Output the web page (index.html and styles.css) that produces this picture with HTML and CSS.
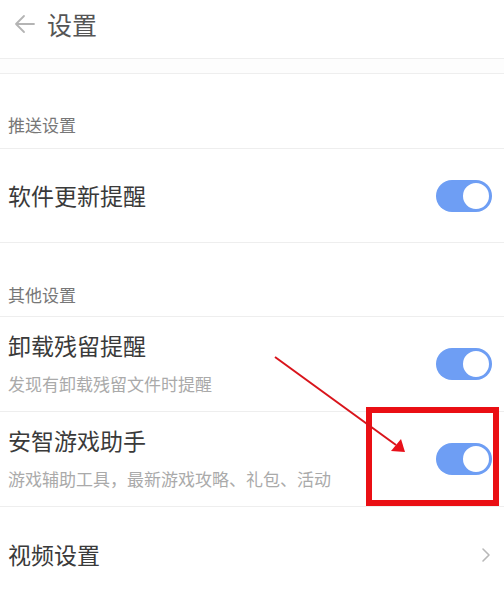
FILE: index.html
```html
<!DOCTYPE html>
<html lang="zh">
<head>
<meta charset="utf-8">
<link rel="stylesheet" href="styles.css">
</head>
<body>
<div class="page">
  <header class="header">
    <svg class="back" width="24" height="24" viewBox="0 0 24 24"><path d="M21 12H3M11 4L3 12L11 20" fill="none" stroke="#b4b4b4" stroke-width="1.8" stroke-linecap="round" stroke-linejoin="round"/></svg>
    <span class="title">设置</span>
  </header>
  <div class="band"></div>
  <div class="section">推送设置</div>
  <div class="row row-single">
    <div class="texts"><div class="name">软件更新提醒</div></div>
    <div class="switch"><div class="knob"></div></div>
  </div>
  <div class="section section-2">其他设置</div>
  <div class="row row-double">
    <div class="texts"><div class="name">卸载残留提醒</div><div class="desc">发现有卸载残留文件时提醒</div></div>
    <div class="switch"><div class="knob"></div></div>
  </div>
  <div class="row row-double">
    <div class="texts"><div class="name">安智游戏助手</div><div class="desc">游戏辅助工具，最新游戏攻略、礼包、活动</div></div>
    <div class="switch"><div class="knob"></div></div>
  </div>
  <div class="row row-last">
    <div class="texts"><div class="name">视频设置</div></div>
    <svg class="chev" width="10" height="16" viewBox="0 0 10 16"><path d="M2 2L8 8L2 14" fill="none" stroke="#b8b8b8" stroke-width="1.6" stroke-linecap="round" stroke-linejoin="round"/></svg>
  </div>
  <div class="redbox"></div>
  <svg class="arrow" width="504" height="600" viewBox="0 0 504 600"><line x1="275" y1="357" x2="396" y2="445" stroke="#d9141b" stroke-width="2"/><polygon points="405,452 391,451 401,439" fill="#e8101a"/></svg>
</div>
</body>
</html>
```
FILE: styles.css
```css
* { box-sizing: border-box; }
html, body { margin: 0; padding: 0; background: #fff; }
body { font-family: "Noto Sans CJK SC", "Noto Sans", sans-serif; }
.page { position: relative; width: 504px; height: 600px; overflow: hidden; }
.header { height: 58px; display: flex; align-items: center; padding-left: 13px; padding-bottom: 10px; }
.back { display: block; margin-right: 10px; }
.title { font-size: 25px; color: #555; line-height: 1; }
.band { height: 16px; border-top: 1px solid #eee; border-bottom: 1px solid #eee; background: #fdfdfd; }
.section { height: 75px; display: flex; align-items: flex-end; padding: 0 0 15px 8px; font-size: 17px; color: #777; line-height: 1; border-bottom: 1px solid #eee; }
.section-2 { height: 74px; padding-bottom: 13px; }
.row { display: flex; align-items: center; justify-content: space-between; padding: 0 12px 0 8px; border-bottom: 1px solid #eee; }
.row-single { height: 94px; }
.row-double { height: 95px; }
.row-last { height: 95px; border-bottom: none; padding-right: 13px; }
.texts { display: flex; flex-direction: column; }
.row-double .texts { padding-bottom: 3px; }
.name { font-size: 23px; color: #3a3a3a; line-height: 1; }
.desc { font-size: 17px; color: #aaa; line-height: 1; margin-top: 18px; }
.switch { width: 56px; height: 32px; border-radius: 16px; background: #6e9ef4; position: relative; flex: none; }
.knob { position: absolute; right: 1px; top: 1px; width: 30px; height: 30px; border-radius: 50%; background: #fff; border: 2px solid #6e9ef4; }
.chev { display: block; }
.redbox { position: absolute; left: 366px; top: 407px; width: 133px; height: 99px; border: 6px solid #ea0f14; }
.arrow { position: absolute; left: 0; top: 0; }
```
